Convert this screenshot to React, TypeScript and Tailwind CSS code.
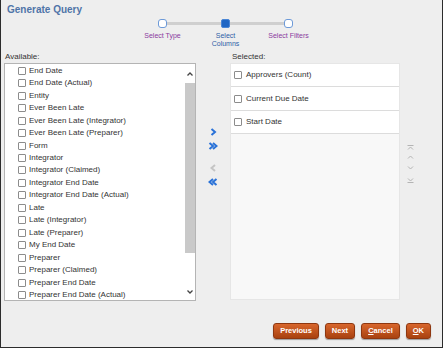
import React from 'react';

const available = [
  'End Date',
  'End Date (Actual)',
  'Entity',
  'Ever Been Late',
  'Ever Been Late (Integrator)',
  'Ever Been Late (Preparer)',
  'Form',
  'Integrator',
  'Integrator (Claimed)',
  'Integrator End Date',
  'Integrator End Date (Actual)',
  'Late',
  'Late (Integrator)',
  'Late (Preparer)',
  'My End Date',
  'Preparer',
  'Preparer (Claimed)',
  'Preparer End Date',
  'Preparer End Date (Actual)',
];

const selected = ['Approvers (Count)', 'Current Due Date', 'Start Date'];

function Box() {
  return <span className="inline-block w-[8px] h-[8px] shrink-0 bg-white border border-[#8c8c8c] rounded-[1px]" />;
}

function Chevron({ dir, double, color }: { dir: 'left' | 'right'; double?: boolean; color: string }) {
  const one = dir === 'right' ? 'M1.5 1 L5 4 L1.5 7' : 'M5 1 L1.5 4 L5 7';
  const two = dir === 'right' ? 'M5 1 L8.5 4 L5 7' : 'M8.5 1 L5 4 L8.5 7';
  return (
    <svg width={double ? 10 : 7} height="8" viewBox={double ? '0 0 10 8' : '0 0 7 8'}>
      <path d={one} fill="none" stroke={color} strokeWidth="2" />
      {double && <path d={two} fill="none" stroke={color} strokeWidth="2" />}
    </svg>
  );
}

function MoveIcon({ kind }: { kind: 'top' | 'up' | 'down' | 'bottom' }) {
  const up = kind === 'top' || kind === 'up';
  return (
    <svg width="7" height="6" viewBox="0 0 7 6">
      {kind === 'top' && <path d="M0.5 0.5 H6.5" stroke="#b4b4b4" strokeWidth="1" />}
      {kind === 'bottom' && <path d="M0.5 5.5 H6.5" stroke="#b4b4b4" strokeWidth="1" />}
      <path d={up ? 'M1 4.5 L3.5 2 L6 4.5' : 'M1 1.5 L3.5 4 L6 1.5'} fill="none" stroke="#b4b4b4" strokeWidth="1" />
    </svg>
  );
}

function Btn({ children }: { children: React.ReactNode }) {
  return (
    <button className="h-[16px] px-[6px] rounded-[3px] border border-[#8e3710] bg-gradient-to-b from-[#d8662c] to-[#a9420f] text-white font-bold text-[7.5px] leading-none shadow-[0_1px_1px_rgba(0,0,0,0.35)]">
      {children}
    </button>
  );
}

export default function App() {
  return (
    <div
      className="w-[443px] h-[348px] bg-[#eeeeee] border-l border-r border-b border-[#2c2c2c] flex flex-col text-[#333]"
      style={{ fontFamily: '"Liberation Sans", Arial, sans-serif' }}
    >
      {/* Title */}
      <div className="pl-[6px] pt-[4px] h-[16px] text-[10px] leading-[12px] font-bold text-[#4f74a8]">Generate Query</div>

      {/* Stepper */}
      <div className="ml-[157px] mt-[3px] w-[135px] h-[9px] flex items-center">
        <span className="w-[9px] h-[9px] rounded-[3px] border-[1.5px] border-[#6d9ad8] bg-white shrink-0" />
        <span className="flex-1 h-[3px] bg-[#cfcfcf]" />
        <span className="w-[9px] h-[9px] rounded-[2px] bg-[#1f66c4] border border-[#4a86d6] shrink-0" />
        <span className="flex-1 h-[3px] bg-[#cfcfcf]" />
        <span className="w-[9px] h-[9px] rounded-[3px] border-[1.5px] border-[#6d9ad8] bg-white shrink-0" />
      </div>
      <div className="ml-[130px] mt-[4px] flex text-[7px] leading-[8px]">
        <div className="w-[63px] text-center text-[#8a3a9e]">Select Type</div>
        <div className="w-[63px] text-center text-[#2f5ea6]">
          Select
          <br />
          Columns
        </div>
        <div className="w-[63px] text-center text-[#8a3a9e]">Select Filters</div>
      </div>

      {/* Main */}
      <div className="flex mt-[4px]">
        <div className="ml-[3px] w-[192px] flex flex-col">
          <div className="text-[8px] leading-[10px] h-[10px] mb-[1px] pl-[1px]">Available:</div>
          <div className="h-[238px] bg-white border border-[#b4b4b4] flex">
            <div className="flex-1 pt-[0.5px] overflow-hidden">
              {available.map((a) => (
                <div key={a} className="h-[12.47px] flex items-center pl-[13px] gap-[3px] text-[8px] leading-none whitespace-nowrap">
                  <Box />
                  <span>{a}</span>
                </div>
              ))}
            </div>
            <div className="w-[10px] flex flex-col">
              <div className="h-[19px] flex items-center justify-center">
                <svg width="6" height="4" viewBox="0 0 6 4">
                  <path d="M0.5 3.5 L3 1 L5.5 3.5" fill="none" stroke="#444" strokeWidth="1.3" />
                </svg>
              </div>
              <div className="h-[170px] bg-[#c9c9c9]" />
              <div className="flex-1 flex items-end justify-center pb-[6px]">
                <svg width="6" height="4" viewBox="0 0 6 4">
                  <path d="M0.5 0.5 L3 3 L5.5 0.5" fill="none" stroke="#444" strokeWidth="1.3" />
                </svg>
              </div>
            </div>
          </div>
        </div>

        <div className="w-[34px] flex flex-col items-center pt-[76px]">
          <Chevron dir="right" color="#2a72d8" />
          <div className="mt-[6px]">
            <Chevron dir="right" double color="#2a72d8" />
          </div>
          <div className="mt-[14px]">
            <Chevron dir="left" color="#c4c4c4" />
          </div>
          <div className="mt-[6px]">
            <Chevron dir="left" double color="#2a72d8" />
          </div>
        </div>

        <div className="w-[170px] flex flex-col">
          <div className="text-[8px] leading-[10px] h-[10px] mb-[1px] pl-[2px]">Selected:</div>
          <div className="h-[237px] bg-[#f8f8f8] border border-[#e6e6e6]">
            {selected.map((s) => (
              <div key={s} className="h-[23.4px] flex items-center pl-[3px] gap-[4px] border-b border-[#dcdcdc] bg-white text-[8px] leading-none">
                <Box />
                <span>{s}</span>
              </div>
            ))}
          </div>
        </div>

        <div className="ml-[7px] flex flex-col items-center pt-[93px] gap-[2.5px]">
          <MoveIcon kind="top" />
          <MoveIcon kind="up" />
          <div className="mt-[3px]">
            <MoveIcon kind="down" />
          </div>
          <div className="mt-[3px]">
            <MoveIcon kind="bottom" />
          </div>
        </div>
      </div>

      {/* Buttons */}
      <div className="flex justify-end gap-[6px] mt-[22px] mr-[11px]">
        <Btn>Previous</Btn>
        <Btn>Next</Btn>
        <Btn>
          <span className="underline">C</span>ancel
        </Btn>
        <Btn>
          <span className="underline">O</span>K
        </Btn>
      </div>
    </div>
  );
}
